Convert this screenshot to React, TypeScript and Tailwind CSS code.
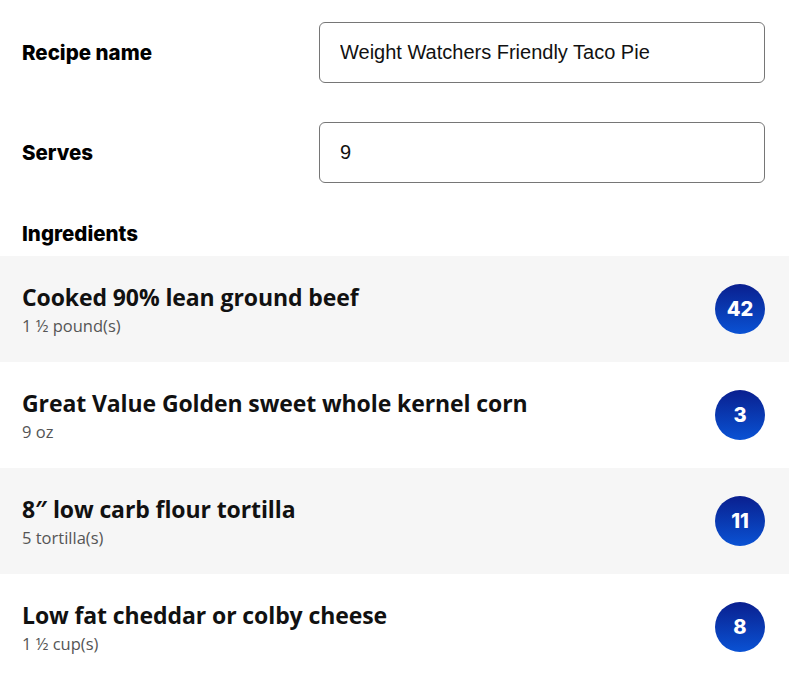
import React from "react";

interface Ingredient { name: string; amount: string; points: number; }

const INGREDIENTS: Ingredient[] = [
  { name: "Cooked 90% lean ground beef", amount: "1 ½ pound(s)", points: 42 },
  { name: "Great Value Golden sweet whole kernel corn", amount: "9 oz", points: 3 },
  { name: "8\u2033 low carb flour tortilla", amount: "5 tortilla(s)", points: 11 },
  { name: "Low fat cheddar or colby cheese", amount: "1 ½ cup(s)", points: 8 },
];

const heading = "font-['Inter',sans-serif] font-extrabold text-[20.5px] text-black";

export default function App() {
  return (
    <div className="min-h-[693px] bg-white font-['Open_Sans',sans-serif]">
      <div className="pt-[22px] pr-[24px] pl-[22px] space-y-[39px]">
        {/* Recipe name */}
        <div className="flex items-center">
          <label className={`${heading} w-[297px] shrink-0 mt-[2px]`}>Recipe name</label>
          <input
            defaultValue="Weight Watchers Friendly Taco Pie"
            className="flex-1 h-[61px] px-[20px] text-[20px] text-[#111] font-['Liberation_Sans',sans-serif] border border-[#767676] rounded-[6px] outline-none"
          />
        </div>
        {/* Serves */}
        <div className="flex items-center">
          <label className={`${heading} w-[297px] shrink-0 mt-[2px]`}>Serves</label>
          <input
            defaultValue="9"
            className="flex-1 h-[61px] px-[20px] text-[20px] text-[#111] font-['Liberation_Sans',sans-serif] border border-[#767676] rounded-[6px] outline-none"
          />
        </div>
      </div>

      <div className="h-[73px] flex items-end px-[22px] pb-[6px]">
        <h2 className={heading}>Ingredients</h2>
      </div>

      <div>
        {INGREDIENTS.map((ing, idx) => (
          <div
            key={ing.name}
            className={`h-[106px] flex items-center justify-between pl-[22px] pr-[24px] ${idx % 2 === 0 ? "bg-[#f6f6f6]" : "bg-white"}`}
          >
            <div className="mt-[1px]">
              <p className="text-[23px] leading-[28px] font-bold text-[#111] tracking-[-0.1px]">{ing.name}</p>
              <p className="text-[16.5px] leading-[22px] text-[#555] mt-[4px]">{ing.amount}</p>
            </div>
            <div className="w-[50px] h-[50px] rounded-full bg-gradient-to-b from-[#0a1f8f] to-[#0a52d4] flex items-center justify-center">
              <span className="font-['Inter',sans-serif] font-extrabold text-[20px] text-white">{ing.points}</span>
            </div>
          </div>
        ))}
      </div>
    </div>
  );
}
